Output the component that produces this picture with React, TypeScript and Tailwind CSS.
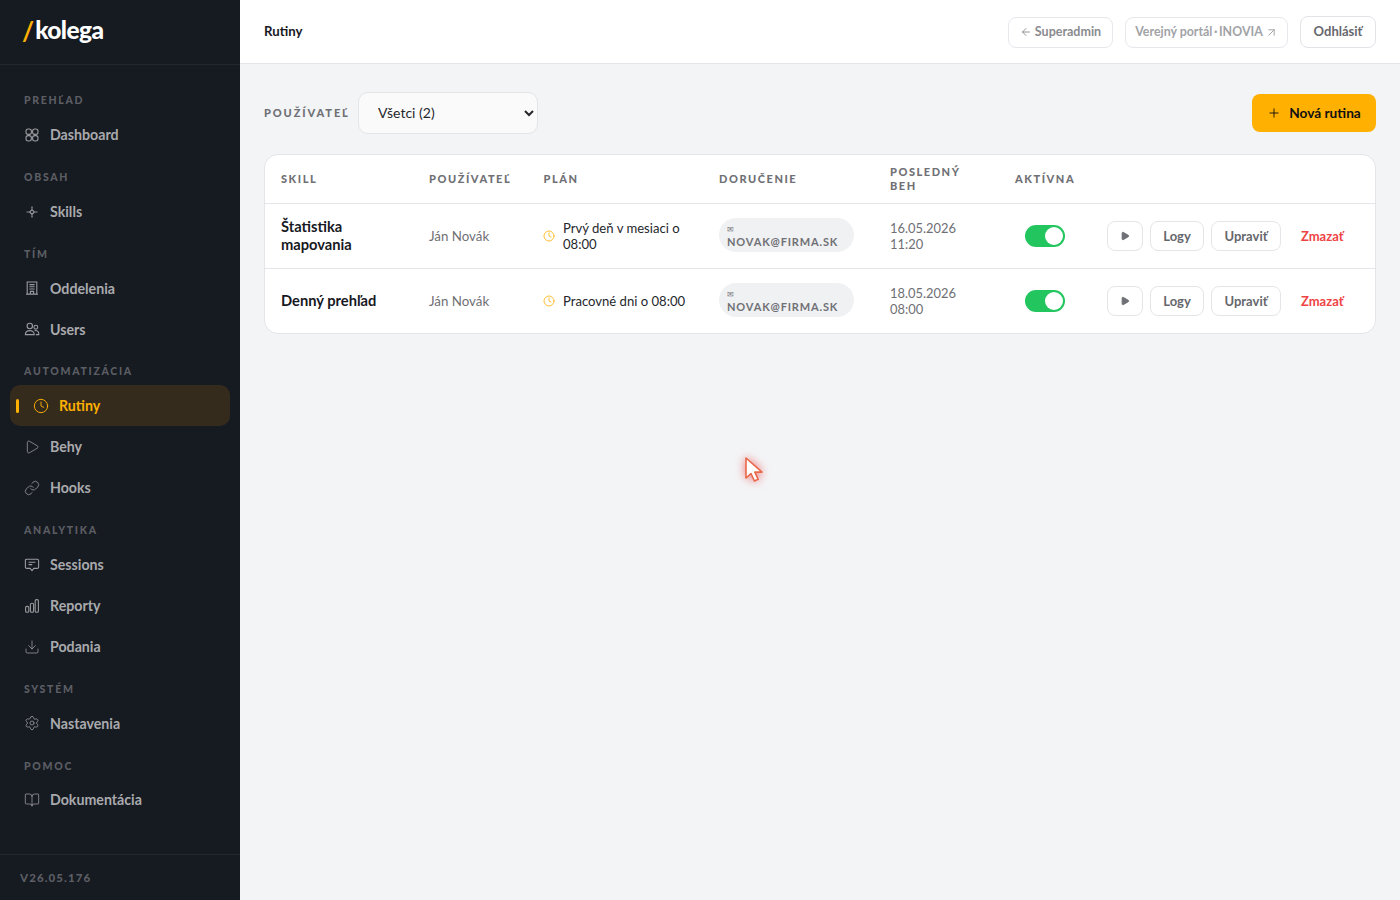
import React from 'react';
import { ArrowLeft, ArrowUpRight, Plus, Clock, Play, Link, Download, Settings, BookOpen } from 'lucide-react';

const Grid = (p: { className?: string }) => (
  <svg className={p.className} viewBox="0 0 16 16" fill="none" stroke="currentColor" strokeWidth="1.1">
    <rect x="2" y="2" width="5.4" height="5.4" rx="2.2" />
    <rect x="8.6" y="2" width="5.4" height="5.4" rx="2.2" />
    <rect x="2" y="8.6" width="5.4" height="5.4" rx="2.2" />
    <rect x="8.6" y="8.6" width="5.4" height="5.4" rx="2.2" />
  </svg>
);

const Sparkle = (p: { className?: string }) => (
  <svg className={p.className} viewBox="0 0 16 16" fill="none" stroke="currentColor" strokeWidth="1.2">
    <path d="M8 5.6 10.4 8 8 10.4 5.6 8z" />
    <path d="M8 2.6v2.2M8 11.2v2.2M2.6 8h2.2M11.2 8h2.2" />
  </svg>
);

const Tower = (p: { className?: string }) => (
  <svg className={p.className} viewBox="0 0 16 16" fill="none" stroke="currentColor" strokeWidth="1.1">
    <path d="M3.2 2h9.6v12H3.2zM2 14.2h12M2.6 2h10.8" />
    <path d="M5.4 4.6h5.2M5.4 6.8h5.2M5.4 9h5.2M6.4 14v-2.6h3.2V14" />
  </svg>
);

const People = (p: { className?: string }) => (
  <svg className={p.className} viewBox="0 0 16 16" fill="none" stroke="currentColor" strokeWidth="1.1">
    <circle cx="5.8" cy="5" r="2.7" />
    <circle cx="11.8" cy="6.2" r="1.9" />
    <path d="M1.4 13.6c0-2.6 1.9-4 4.4-4s4.4 1.4 4.4 4z" />
    <path d="M10.6 9.6c2.2-.4 4.2.8 4.2 3.2v.8h-3" />
  </svg>
);

const Chat = (p: { className?: string }) => (
  <svg className={p.className} viewBox="0 0 16 16" fill="none" stroke="currentColor" strokeWidth="1.1">
    <path d="M1.4 3.4C1.4 2.6 2 2.2 2.8 2.2h10.4c.8 0 1.4.4 1.4 1.2v6.8c0 .8-.6 1.2-1.4 1.2H9.9L8 13.6l-1.9-2.2H2.8c-.8 0-1.4-.4-1.4-1.2z" />
    <path d="M4.6 5.2h6.8M4.6 7.6h3.6" />
  </svg>
);

const Bars = (p: { className?: string }) => (
  <svg className={p.className} viewBox="0 0 16 16" fill="none" stroke="currentColor" strokeWidth="1.1">
    <rect x="1.6" y="8.4" width="3.2" height="5.8" rx="1.3" />
    <rect x="6.4" y="5.2" width="3.2" height="9" rx="1.3" />
    <rect x="11.2" y="1.6" width="3.2" height="12.6" rx="1.3" />
  </svg>
);

type Item = { label: string; icon: React.ComponentType<any>; active?: boolean };

const sections: { title: string; items: Item[] }[] = [
  { title: 'PREHĽAD', items: [{ label: 'Dashboard', icon: Grid }] },
  { title: 'OBSAH', items: [{ label: 'Skills', icon: Sparkle }] },
  { title: 'TÍM', items: [{ label: 'Oddelenia', icon: Tower }, { label: 'Users', icon: People }] },
  { title: 'AUTOMATIZÁCIA', items: [{ label: 'Rutiny', icon: Clock, active: true }, { label: 'Behy', icon: Play }, { label: 'Hooks', icon: Link }] },
  { title: 'ANALYTIKA', items: [{ label: 'Sessions', icon: Chat }, { label: 'Reporty', icon: Bars }, { label: 'Podania', icon: Download }] },
  { title: 'SYSTÉM', items: [{ label: 'Nastavenia', icon: Settings }] },
  { title: 'POMOC', items: [{ label: 'Dokumentácia', icon: BookOpen }] },
];

const Sidebar = () => (
  <aside className="w-[240px] h-[900px] shrink-0 bg-[#161a21] flex flex-col">
    <div className="h-[65px] shrink-0 border-b border-[#23272f] flex items-center pl-[22px] pb-[3px]">
      <span className="text-[#ffb000] text-[26px] leading-none font-bold mr-[1px]">/</span>
      <span className="text-white text-[24.5px] leading-none font-black tracking-[-0.6px]">kolega</span>
    </div>
    <nav className="flex-1 pt-[13.7px]">
      {sections.map((s) => (
        <div key={s.title}>
          <div className="h-[35.7px] pt-[16.7px] pl-[24px] text-[10.5px] leading-[11px] font-black tracking-[1.7px] text-[#5c5e64]">{s.title}</div>
          {s.items.map((it) => {
            const Icon = it.icon;
            return it.active ? (
              <div key={it.label} className="h-[41px] mx-[10px] pl-[6px] rounded-[10px] bg-[#352b1d] flex items-center text-[#ffb000]">
                <span className="w-[3px] h-[14px] rounded-full bg-[#ffb000] mr-[14px]" />
                <Icon className="w-[16px] h-[16px] mr-[10px]" strokeWidth={1.4} />
                <span className="text-[14.2px] font-bold">{it.label}</span>
              </div>
            ) : (
              <div key={it.label} className="h-[41px] mx-[10px] pl-[14px] flex items-center text-[#a9aaad]">
                <Icon className="w-[16px] h-[16px] mr-[10px] text-[#9a9b9f]" strokeWidth={1.2} />
                <span className="text-[14.2px] font-bold">{it.label}</span>
              </div>
            );
          })}
        </div>
      ))}
    </nav>
    <div className="h-[46px] shrink-0 border-t border-[#23272f] pl-[20px] flex items-center text-[11.5px] font-black tracking-[1.1px] text-[#5c5e64]">V26.05.176</div>
  </aside>
);

const Header = () => (
  <header className="h-[64px] shrink-0 bg-white border-b border-[#e4e5e9] pl-[24px] pr-[24px] flex items-center justify-between">
    <span className="text-[13.2px] font-bold text-[#17191f]">Rutiny</span>
    <div className="flex items-end gap-[12px]">
      <div className="h-[31px] w-[105px] rounded-[8px] border border-[#e7e8ec] flex items-center justify-center gap-[3px] text-[12.5px] font-bold text-[#8a8b8f]">
        <ArrowLeft className="w-[12px] h-[12px]" strokeWidth={1.8} />
        Superadmin
      </div>
      <div className="h-[31px] w-[163px] rounded-[8px] border border-[#e7e8ec] flex items-center justify-center gap-[2px] text-[12.4px] font-bold text-[#a2a3a7]">
        {'Verejný portál\u2009·\u2009INOVIA'}
        <ArrowUpRight className="w-[13px] h-[13px]" strokeWidth={1.8} />
      </div>
      <div className="h-[32px] w-[76px] rounded-[8px] border border-[#e2e3e7] flex items-center justify-center text-[13px] font-bold text-[#66676c]">Odhlásiť</div>
    </div>
  </header>
);

const rows = [
  { skill: ['Štatistika', 'mapovania'], plan: ['Prvý deň v mesiaci o', '08:00'], last: ['16.05.2026', '11:20'] },
  { skill: ['Denný prehľad'], plan: ['Pracovné dni o 08:00'], last: ['18.05.2026', '08:00'] },
];

const thCls = 'text-left align-middle pl-[16px] text-[11px] leading-[14px] font-black tracking-[1.55px] text-[#6f7075]';

const RoutinesTable = () => (
  <div className="bg-white border border-[#e4e5e9] rounded-[14px] overflow-hidden">
    <table className="w-full table-fixed border-collapse">
      <colgroup>
        <col className="w-[148px]" />
        <col className="w-[114.5px]" />
        <col className="w-[175.5px]" />
        <col className="w-[171px]" />
        <col className="w-[125px]" />
        <col className="w-[92px]" />
        <col />
      </colgroup>
      <thead>
        <tr className="h-[48px] border-b border-[#e4e5e9]">
          <th className={thCls}>SKILL</th>
          <th className={thCls}>POUŽÍVATEĽ</th>
          <th className={thCls}>PLÁN</th>
          <th className={thCls}>DORUČENIE</th>
          <th className={thCls}>POSLEDNÝ<br />BEH</th>
          <th className={thCls}>AKTÍVNA</th>
          <th />
        </tr>
      </thead>
      <tbody>
        {rows.map((r, i) => (
          <tr key={i} className={i === 0 ? 'h-[65px] border-b border-[#e4e5e9]' : 'h-[65px]'}>
            <td className="pl-[16px] pb-[2px] text-[14.7px] leading-[18px] font-bold text-[#17191f]">
              {r.skill.map((l) => <div key={l}>{l}</div>)}
            </td>
            <td className="pl-[16px] pt-[2px] text-[13.3px] text-[#6f7075]">Ján Novák</td>
            <td className="pl-[16px] pt-[1px]">
              <div className="flex items-center gap-[8px] text-[13.1px] leading-[16px] text-[#25272c]">
                <Clock className="w-[12px] h-[12px] shrink-0 -ml-[0.5px] text-[#ffb000]" strokeWidth={1.6} />
                <div>{r.plan.map((l) => <div key={l}>{l}</div>)}</div>
              </div>
            </td>
            <td className="pl-[16px] pb-[2px]">
              <div className="w-[135px] h-[34px] rounded-full bg-[#f0f1f3] pl-[8px] pt-[6px] flex flex-col">
                <span className="text-[8px] leading-[11px] text-[#77787d]">✉</span>
                <span className="text-[11px] leading-[14px] font-bold tracking-[0.85px] text-[#6f7075]">NOVAK@FIRMA.SK</span>
              </div>
            </td>
            <td className="pl-[16px] pt-[1px] text-[12.9px] leading-[16px] text-[#6f7075]">
              {r.last.map((l) => <div key={l}>{l}</div>)}
            </td>
            <td className="pl-[26px]">
              <div className="w-[40px] h-[22px] rounded-full bg-[#22c55e] flex items-center justify-end pr-[2px]">
                <span className="w-[18px] h-[18px] rounded-full bg-white" />
              </div>
            </td>
            <td className="pl-[16px]">
              <div className="flex items-center gap-[7px]">
                <div className="w-[36px] h-[30px] rounded-[8px] border border-[#e4e5e9] flex items-center justify-center">
                  <Play className="w-[10px] h-[10px] text-[#6f7075] fill-[#6f7075]" />
                </div>
                <div className="w-[54px] h-[30px] pt-[2px] rounded-[8px] border border-[#e4e5e9] flex items-center justify-center text-[13px] font-bold text-[#66676c]">Logy</div>
                <div className="w-[70px] h-[30px] pt-[2px] rounded-[8px] border border-[#e4e5e9] flex items-center justify-center text-[13px] font-bold text-[#66676c]">Upraviť</div>
                <div className="pl-[13px] pt-[2px] text-[13px] font-bold text-[#ef4444]">Zmazať</div>
              </div>
            </td>
          </tr>
        ))}
      </tbody>
    </table>
  </div>
);

const Cursor = () => (
  <svg className="absolute left-[742px] top-[455px] w-[24px] h-[30px] drop-shadow-[0_0_5px_rgba(239,68,68,0.75)]" viewBox="0 0 24 30">
    <path d="M4 3v20l5-4.5 3.4 7.5 3.8-1.7-3.4-7.2H20z" fill="#fff" stroke="#e8694a" strokeWidth="1.6" strokeLinejoin="round" />
  </svg>
);

export default function App() {
  return (
    <div className="relative w-[1400px] h-[900px] flex overflow-hidden bg-[#f3f4f6] font-['Lato','Liberation_Sans',sans-serif]">
      <Sidebar />
      <div className="flex-1 flex flex-col min-w-0">
        <Header />
        <main className="flex-1 px-[24px] pt-[28px]">
          <div className="h-[42px] mb-[20px] flex items-center justify-between">
            <div className="flex items-center gap-[8px]">
              <span className="w-[86px] text-[11px] font-black tracking-[1.9px] text-[#6f7075] whitespace-nowrap">POUŽÍVATEĽ</span>
              <select className="w-[180px] h-[42px] pb-[2px] rounded-[10px] border border-[#e4e5e9] bg-[#fafafa] pl-[15px] text-[14px] text-[#25272c]" defaultValue="all">
                <option value="all">Všetci (2)</option>
              </select>
            </div>
            <div className="w-[124px] h-[38px] rounded-[8px] bg-[#ffb000] flex items-center justify-center gap-[8px] text-[13.7px] font-bold text-[#111]">
              <Plus className="w-[14px] h-[14px]" strokeWidth={1.6} />
              Nová rutina
            </div>
          </div>
          <RoutinesTable />
        </main>
      </div>
      <Cursor />
    </div>
  );
}
